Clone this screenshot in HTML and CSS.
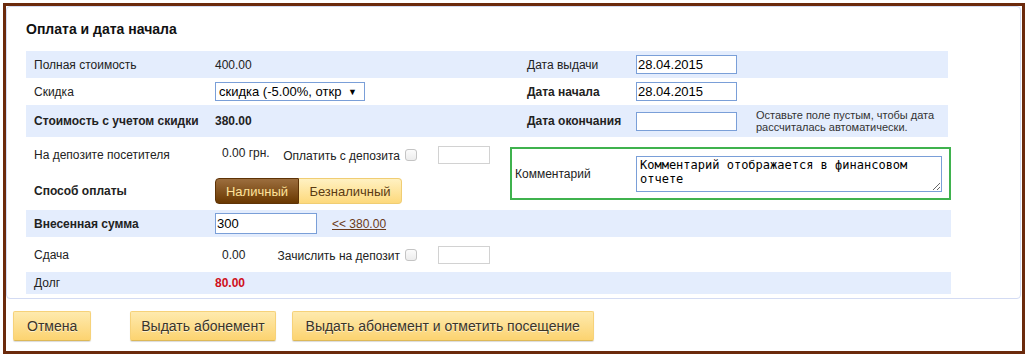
FILE: index.html
```html
<!DOCTYPE html>
<html lang="ru">
<head>
<meta charset="UTF-8" />
<title>Оплата и дата начала</title>
<link rel="stylesheet" href="styles.css">
</head>
<body>

<div class="frame">
  <div class="panel">
    <h2>Оплата и дата начала</h2>

    <div class="top">
      <!-- левая колонка: стоимость и оплата -->
      <div class="left">
        <div class="row blue h27">
          <span>Полная стоимость</span>
          <span>400.00</span>
        </div>
        <div class="row h27">
          <span>Скидка</span>
          <div class="select"><span>скидка (-5.00%, откр</span><span class="arrow">▼</span></div>
        </div>
        <div class="row blue h32">
          <b>Стоимость с учетом скидки</b>
          <b>380.00</b>
        </div>
        <div class="row h35">
          <span>На депозите посетителя</span>
          <div class="inline">
            <span class="val up">0.00 грн.</span>
            <span class="chk-label">Оплатить с депозита</span>
            <input type="checkbox" class="chk" />
            <input type="text" class="small" />
          </div>
        </div>
        <div class="row h38">
          <b>Способ оплаты</b>
          <div class="toggle">
            <span class="on">Наличный</span>
            <span>Безналичный</span>
          </div>
        </div>
      </div>

      <!-- правая колонка: даты и комментарий -->
      <div class="right">
        <div class="drow blue h27">
          <span>Дата выдачи</span>
          <input type="text" class="date" value="28.04.2015" />
        </div>
        <div class="drow h27">
          <b>Дата начала</b>
          <input type="text" class="date" value="28.04.2015" />
        </div>
        <div class="drow blue h32">
          <b>Дата окончания</b>
          <div class="inline">
            <input type="text" class="date" />
            <span class="hint">Оставьте поле пустым, чтобы дата<br>рассчиталась автоматически.</span>
          </div>
        </div>
        <div class="comment">
          <span>Комментарий</span>
          <textarea>Комментарий отображается в финансовом отчете</textarea>
        </div>
      </div>
    </div>

    <div class="row wide blue h27">
      <b>Внесенная сумма</b>
      <div class="inline">
        <input type="text" class="sum" value="300" />
        <a href="#" class="fill">&lt;&lt; 380.00</a>
      </div>
    </div>
    <div class="row wide h35">
      <span>Сдача</span>
      <div class="inline">
        <span class="val">0.00</span>
        <span class="chk-label">Зачислить на депозит</span>
        <input type="checkbox" class="chk" />
        <input type="text" class="small" />
      </div>
    </div>
    <div class="row wide blue h22">
      <span>Долг</span>
      <b class="debt">80.00</b>
    </div>
  </div>

  <div class="actions">
    <button>Отмена</button>
    <button class="issue">Выдать абонемент</button>
    <button>Выдать абонемент и отметить посещение</button>
  </div>
</div>

</body>
</html>
```

FILE: styles.css
```css
* { box-sizing: border-box; }
body { margin: 0; font-family: "Liberation Sans", Arial, sans-serif; font-size: 12px; color: #222; background: #fff; }

.frame { margin: 3px 1px 3px 3px; height: 351px; border: 3px solid #6b2a0c; }
.panel { margin-right: 1px; padding: 12px 0 4px 19px; border: 1px solid #d3dbf3; border-radius: 4px; }
.panel h2 { margin: 0 0 12px; font-size: 14px; line-height: 20px; color: #111; }

.top { display: flex; }
.left { width: 474px; }
.right { width: 448px; }

.blue { background: #e4edfd; }
.h22 { height: 22px; }
.h27 { height: 27px; }
.h32 { height: 32px; }
.h35 { height: 35px; }
.h38 { height: 38px; }

.row { display: grid; grid-template-columns: 181px 1fr; align-items: center; padding-left: 8px; }
.row.wide { width: 925px; }
.drow { display: grid; grid-template-columns: 109px 1fr; align-items: center; padding-left: 27px; }
.inline { display: flex; align-items: center; }

input[type=text], textarea { font-family: "Liberation Sans", Arial, sans-serif; font-size: 13px; color: #000; padding: 0 1px; margin: 0; border: 1px solid #7a9fd8; border-radius: 0; background: #fff; }
.date { width: 101px; height: 19px; }
.sum { width: 102px; height: 21px; }
.small { width: 52px; height: 18px; margin-left: 20px !important; border-color: #d2d2d2 !important; }

.select { width: 150px; height: 19px; display: flex; justify-content: space-between; align-items: center; padding: 0 7px 0 3px; border: 1px solid #7a9fd8; background: #fff; font-size: 13px; color: #000; overflow: hidden; white-space: nowrap; }
.select .arrow { font-size: 9px; }

.val { width: 55px; padding-left: 7px; }
.val.up { margin-top: -3px; }
.chk-label { width: 134px; padding-right: 4px; text-align: right; padding-top: 3px; }
.chk { appearance: none; width: 12px; height: 12px; margin: 0 0 0 1px; border: 1px solid #c4c4c4; border-radius: 3px; background: linear-gradient(#fbfbfb, #ececec); }
.chk + .small { margin-left: 21px !important; }

.toggle { display: flex; width: 187px; height: 26px; font-size: 13px; }
.toggle span { display: flex; align-items: center; justify-content: center; height: 100%; }
.toggle .on { width: 84px; color: #ffe39a; background: linear-gradient(#9c6e3e, #6a3800); border: 1px solid #5e3306; border-radius: 4px 0 0 4px; }
.toggle span:last-child { flex: 1; color: #5a3a12; background: linear-gradient(#fff1c2, #fdd97c); border: 1px solid #f0cd73; border-left: 0; border-radius: 0 4px 4px 0; }

.hint { margin-left: 19px; font-size: 11px; line-height: 12px; color: #333; }

.comment { display: grid; grid-template-columns: 121px 1fr; align-items: center; width: 441px; height: 53px; margin: 10px 0 0 10px; padding-left: 3px; border: 2px solid #3fb24e; }
.comment textarea { width: 306px; height: 36px; padding: 1px 3px; resize: both; font-family: "DejaVu Sans Mono", "Liberation Mono", monospace; font-size: 12px; line-height: 14px; }

a.fill { margin-left: 15px; color: #6b3a1a; }
.debt { color: #cf1020; }

.actions { display: flex; padding: 12px 0 0 7px; }
.actions button { height: 30px; padding: 0 13px; margin-right: 16px; font-family: "Liberation Sans", Arial, sans-serif; font-size: 14px; color: #3a3428; text-shadow: 0 1px 0 rgba(255,255,255,0.6); background: linear-gradient(#feeaae, #fcd370); border: 1px solid #f6d27a; border-bottom-color: #dcb858; border-radius: 2px; box-shadow: 0 1px 1px rgba(0,0,0,0.15); }
.actions button.issue { margin-left: 23px; padding: 0 10px; }
```
